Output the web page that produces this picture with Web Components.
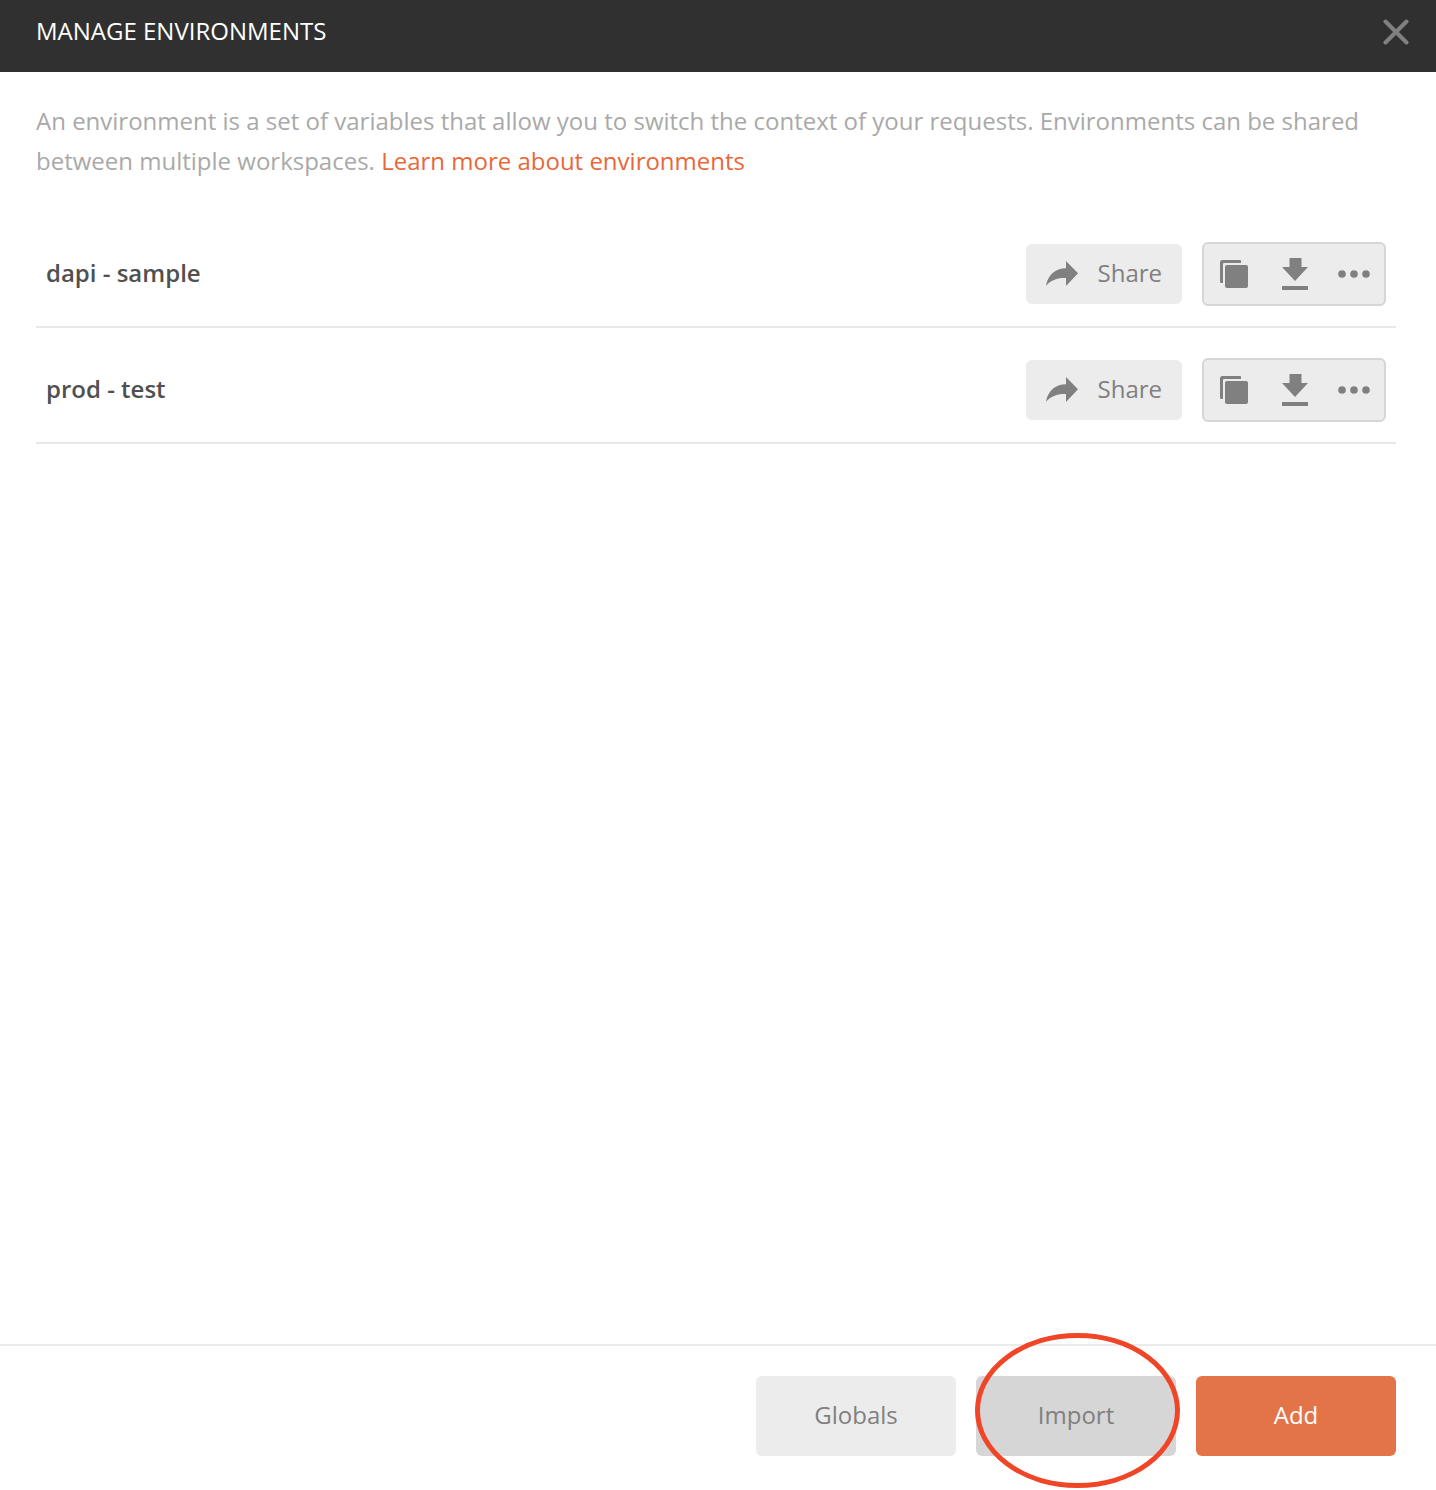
<!DOCTYPE html>
<html><head><meta charset="utf-8"><title>Manage Environments</title>
<style>
html,body{margin:0;padding:0;background:#fff;font-family:"Open Sans",sans-serif}
</style></head><body>
<env-modal>
  <env-row name="dapi - sample"></env-row>
  <env-row name="prod - test"></env-row>
</env-modal>
<script>
class EnvButton extends HTMLElement{
  constructor(){super();this.attachShadow({mode:'open'}).innerHTML=`<style>
  :host{display:flex;align-items:center;justify-content:center;width:200px;height:80px;padding-bottom:2px;border-radius:6px;background:#ececec;color:#808080;font:24px/32px "Open Sans",sans-serif;box-sizing:border-box;flex:none}
  :host([kind=active]){background:#d6d6d6}
  :host([kind=primary]){background:#e37448;color:#fff}
  </style><slot></slot>`;}
}
customElements.define('env-button',EnvButton);
class EnvRow extends HTMLElement{
  constructor(){super();this.attachShadow({mode:'open'}).innerHTML=`<style>
  :host{display:flex;align-items:center;height:116px;box-sizing:border-box;border-bottom:2px solid #e8e8e8;padding:10px 10px 0;font-family:"Open Sans",sans-serif}
  .name{flex:1;font-size:24px;font-weight:600;color:#505050;line-height:32px;padding-bottom:2px}
  .share{display:flex;align-items:center;width:156px;height:60px;box-sizing:border-box;padding:0 20px;background:#ececec;border-radius:6px;color:#808080;font-size:24px;margin-right:20px;justify-content:space-between}
  .share span{padding-bottom:4px}
  .group{display:flex;align-items:center;width:184px;height:64px;box-sizing:border-box;border:2px solid #d6d6d6;border-radius:6px;background:#ececec;padding:0 14px 0 16px;justify-content:space-between}
  svg{display:block;fill:#808080}
  .dl{margin-left:4px}
  </style>
  <div class="name"></div>
  <div class="share"><svg width="32" height="26" viewBox="0 0 32 26"><path d="M20 0 L32 12.300 L20 25 L20 17 C12 16.500 5 19 0 24.700 C2 14 9 7.500 20 7.300Z"/></svg><span>Share</span></div>
  <div class="group">
    <svg width="28" height="28" viewBox="0 0 28 28"><path d="M2.500 0H20a1 1 0 0 1 1 1V3H4a1 1 0 0 0-1 1V23H1.500A1.500 1.500 0 0 1 0 21.500V2.500A2.500 2.500 0 0 1 2.500 0Z"/><rect x="5" y="5" width="23" height="23" rx="2"/></svg>
    <svg class="dl" width="26" height="32" viewBox="0 0 26 32"><path d="M7.500 0H19.500V9H26L13 23 0 9H7.500Z"/><rect y="28" width="26" height="4"/></svg>
    <svg width="32" height="8" viewBox="0 0 32 8"><circle cx="4" cy="4" r="3.800"/><circle cx="16" cy="4" r="3.800"/><circle cx="28" cy="4" r="3.800"/></svg>
  </div>`;}
  connectedCallback(){this.shadowRoot.querySelector('.name').textContent=this.getAttribute('name');}
}
customElements.define('env-row',EnvRow);
class EnvModal extends HTMLElement{
  constructor(){super();this.attachShadow({mode:'open'}).innerHTML=`<style>
  :host{display:flex;flex-direction:column;position:relative;height:1490px;overflow:hidden;font-family:"Open Sans",sans-serif;background:#fff}
  header{display:flex;align-items:center;justify-content:space-between;height:72px;flex:none;background:#303030;color:#fff;padding:0 27px 0 36px;font-size:24px;box-sizing:border-box}
  header span{padding-bottom:12px}
  header svg{display:block;margin-bottom:8px}
  main{flex:1;padding:29px 40px 0 36px}
  p{margin:0 0 31px;font-size:24px;line-height:40px;color:#a9a9a9}
  a{color:#e8683a;text-decoration:none}
  footer{display:flex;justify-content:flex-end;gap:20px;flex:none;border-top:2px solid #ebebeb;padding:30px 40px 34px}
  .ring{position:absolute;left:975px;top:1333px;pointer-events:none}
  </style>
  <header><span>MANAGE ENVIRONMENTS</span><svg width="26" height="26" viewBox="0 0 26 26"><path d="M2.500 2.500L23.500 23.500M23.500 2.500L2.500 23.500" stroke="#808080" stroke-width="4" stroke-linecap="round"/></svg></header>
  <main>
    <p>An environment is a set of variables that allow you to switch the context of your requests. Environments can be shared between multiple workspaces. <a href="#">Learn more about environments</a></p>
    <slot></slot>
  </main>
  <footer><env-button>Globals</env-button><env-button kind="active">Import</env-button><env-button kind="primary">Add</env-button></footer>
  <svg class="ring" width="205" height="155" viewBox="0 0 205 155"><ellipse cx="102.500" cy="77.500" rx="100" ry="75" fill="none" stroke="#f04527" stroke-width="5"/></svg>`;}
}
customElements.define('env-modal',EnvModal);
</script>
</body></html>
